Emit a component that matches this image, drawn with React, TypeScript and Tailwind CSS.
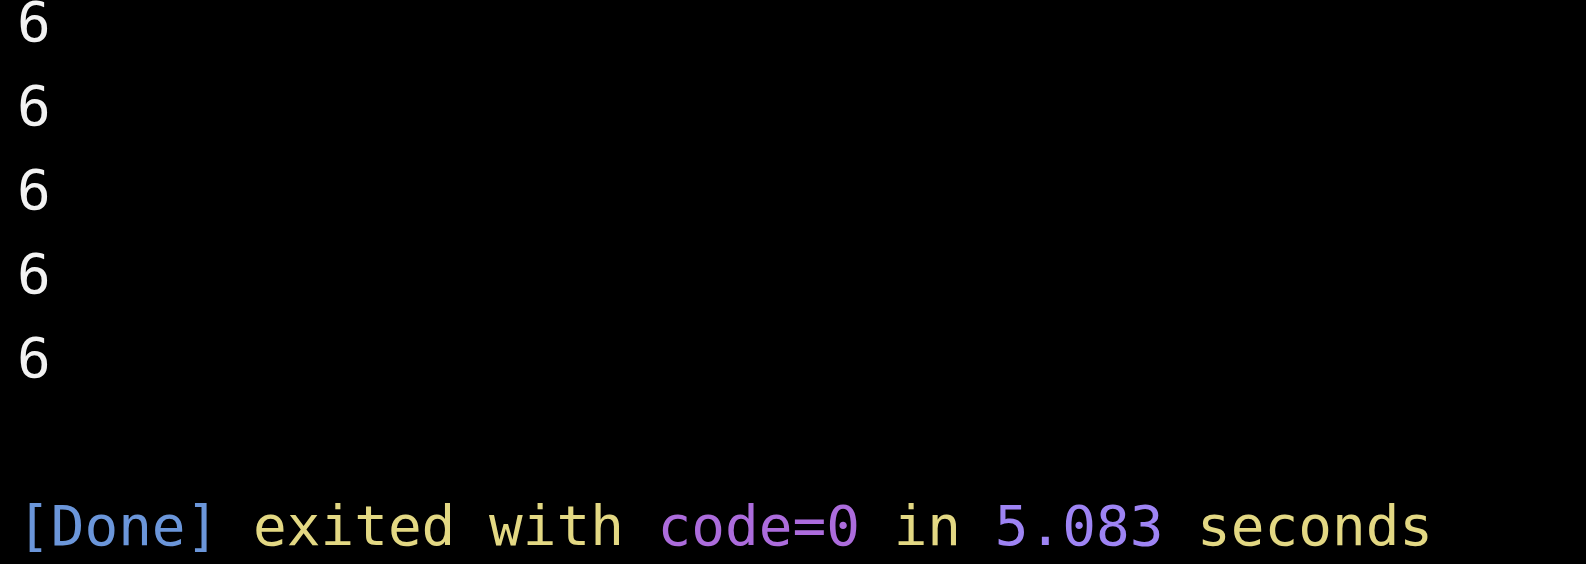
import React from 'react';

const lines = ['6', '6', '6', '6', '6'];

export default function App() {
  return (
    <div className="w-[1586px] h-[564px] overflow-hidden bg-black">
      <div
        className="-mt-[20px] pl-[17px] text-[56px] leading-[84px] text-[#f2f2f2] whitespace-pre"
        style={{ fontFamily: '"DejaVu Sans Mono", Menlo, monospace' }}
      >
        {lines.map((l, i) => (
          <div key={i}>{l}</div>
        ))}
        <div>&nbsp;</div>
        <div>
          <span className="text-[#6b96da]">[Done]</span>{' '}
          <span className="text-[#e3d883]">exited with</span>{' '}
          <span className="text-[#ac6cdc]">code=0</span>{' '}
          <span className="text-[#e3d883]">in</span>{' '}
          <span className="text-[#9e84f4]">5.083</span>{' '}
          <span className="text-[#e3d883]">seconds</span>
        </div>
      </div>
    </div>
  );
}
